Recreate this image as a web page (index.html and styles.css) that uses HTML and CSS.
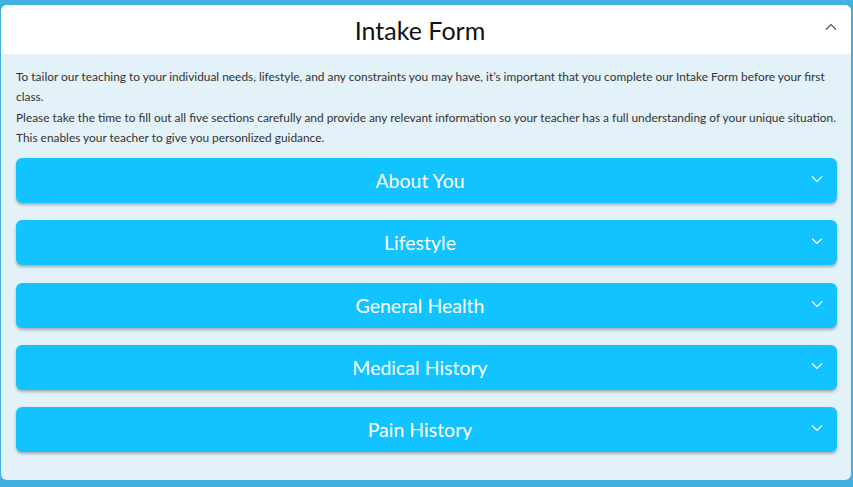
FILE: index.html
```html
<!DOCTYPE html>
<html lang="en">
<head>
<meta charset="utf-8">
<title>Intake Form</title>
<link rel="stylesheet" href="styles.css">
</head>
<body>
<div class="card">
  <div class="card-header">
    <h1 class="title">Intake Form</h1>
    <svg class="chev-up" width="12" height="8" viewBox="0 0 12 8"><path d="M1 6.5 L6 1.5 L11 6.5" fill="none" stroke="#555" stroke-width="1.2"/></svg>
  </div>
  <div class="card-body">
    <p class="intro">To tailor our teaching to your individual needs, lifestyle, and any constraints you may have, it’s important that you complete our Intake Form before your first class.<br>Please take the time to fill out all five sections carefully and provide any relevant information so your teacher has a full understanding of your unique situation. This enables your teacher to give you personlized guidance.</p>
    <div class="sections">
      <div class="section"><span class="section-title">About You</span><svg class="chev-down" width="12" height="8" viewBox="0 0 12 8"><path d="M1 1.5 L6 6.5 L11 1.5" fill="none" stroke="#fff" stroke-width="1.2"/></svg></div>
      <div class="section"><span class="section-title">Lifestyle</span><svg class="chev-down" width="12" height="8" viewBox="0 0 12 8"><path d="M1 1.5 L6 6.5 L11 1.5" fill="none" stroke="#fff" stroke-width="1.2"/></svg></div>
      <div class="section"><span class="section-title">General Health</span><svg class="chev-down" width="12" height="8" viewBox="0 0 12 8"><path d="M1 1.5 L6 6.5 L11 1.5" fill="none" stroke="#fff" stroke-width="1.2"/></svg></div>
      <div class="section"><span class="section-title">Medical History</span><svg class="chev-down" width="12" height="8" viewBox="0 0 12 8"><path d="M1 1.5 L6 6.5 L11 1.5" fill="none" stroke="#fff" stroke-width="1.2"/></svg></div>
      <div class="section"><span class="section-title">Pain History</span><svg class="chev-down" width="12" height="8" viewBox="0 0 12 8"><path d="M1 1.5 L6 6.5 L11 1.5" fill="none" stroke="#fff" stroke-width="1.2"/></svg></div>
    </div>
  </div>
</div>
</body>
</html>
```

FILE: styles.css
```css
html, body {
  margin: 0;
  height: 100%;
}
body {
  background: #42b1e0;
  padding: 5px 2px 7px 1px;
  box-sizing: border-box;
  font-family: Lato, "Open Sans", sans-serif;
}
.card {
  height: 100%;
  background: #e3f1f9;
  border-radius: 6px;
  overflow: hidden;
  display: flex;
  flex-direction: column;
}
.card-header {
  height: 49px;
  background: #fff;
  display: flex;
  align-items: center;
  justify-content: center;
  padding-right: 12px;
  position: relative;
  flex-shrink: 0;
}
.title {
  margin: 0;
  font-weight: 400;
  font-size: 25px;
  color: #111;
}
.chev-up {
  position: absolute;
  right: 14px;
  top: 18px;
}
.card-body {
  padding: 13px 14px 0 15px;
}
.intro {
  margin: 0 0 10px 0;
  font-size: 11.9px;
  line-height: 20.3px;
  color: #333;
}
.sections {
  display: flex;
  flex-direction: column;
  gap: 17.25px;
}
.section {
  height: 45px;
  background: #12c3ff;
  border-radius: 6px;
  box-shadow: 0 2px 3px rgba(0, 0, 0, 0.28);
  display: flex;
  align-items: center;
  justify-content: center;
  padding-right: 13px;
  position: relative;
}
.section-title {
  color: #fff;
  font-size: 19.5px;
}
.chev-down {
  position: absolute;
  right: 14px;
  top: 17px;
}
```
